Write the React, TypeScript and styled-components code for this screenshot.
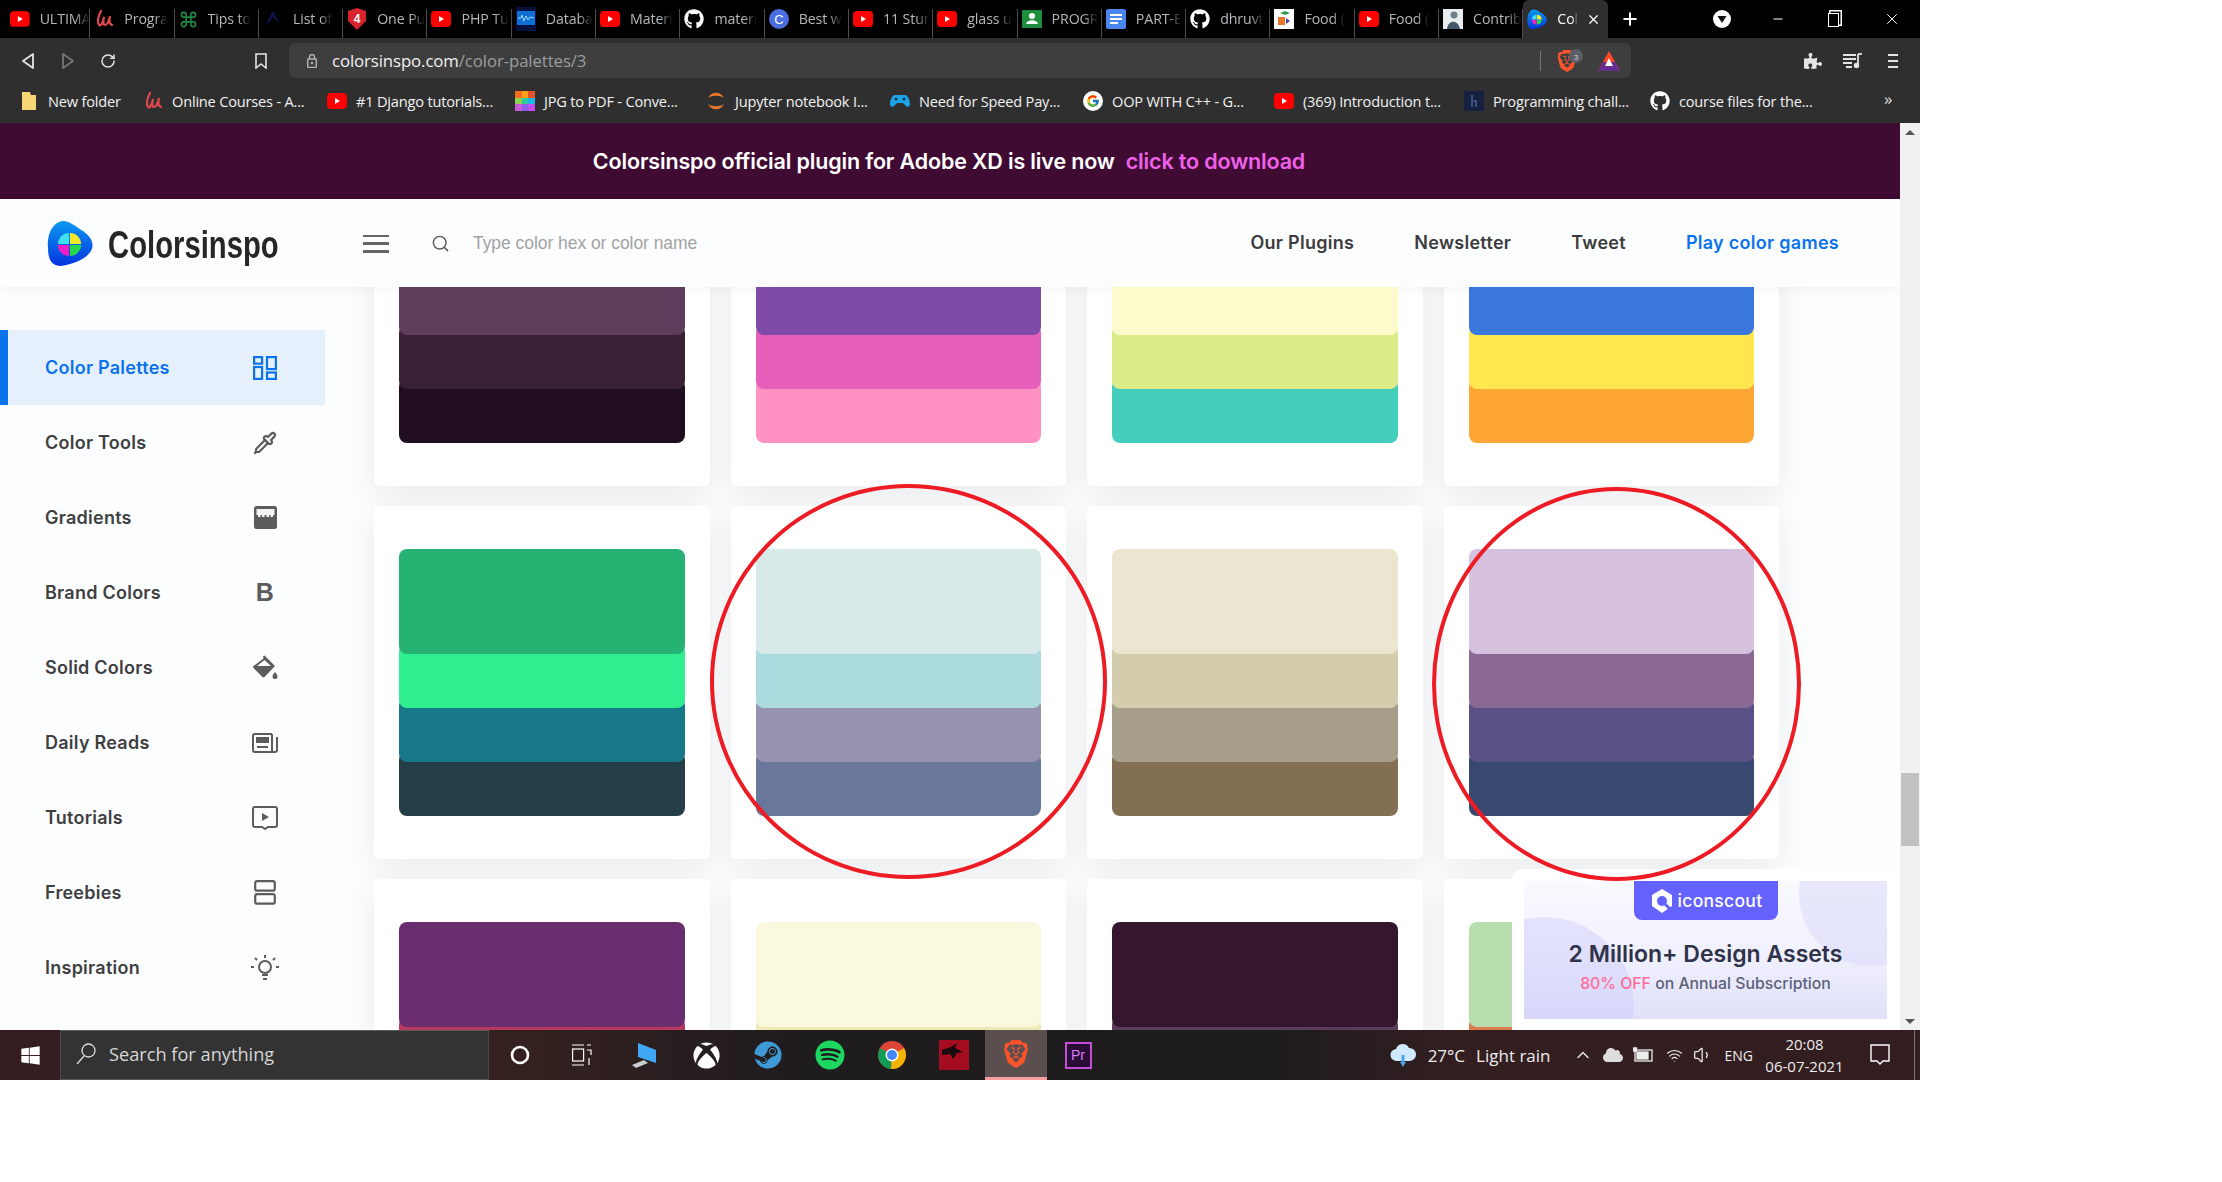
import React from 'react';
import styled, { createGlobalStyle } from 'styled-components';
import { FaGithub, FaWindows, FaXbox, FaSteam, FaSpotify, FaPuzzlePiece, FaCloud } from 'react-icons/fa';
import { FcGoogle } from 'react-icons/fc';
import { SiBrave } from 'react-icons/si';
import { Command, Pipette, Search, Wifi, Volume1, Plus, X, Minus, ChevronUp, RotateCw } from 'lucide-react';

const Global = createGlobalStyle`
  html, body { margin: 0; padding: 0; background: #fff; }
  * { box-sizing: border-box; }
`;

const Screen = styled.div`
  width: 1920px; height: 1080px; display: flex; flex-direction: column; overflow: hidden;
  font-family: "Open Sans", "Liberation Sans", sans-serif;
`;

/* ---------- tab strip ---------- */
const TabStrip = styled.div`
  height: 38px; flex: none; background: #000; display: flex; align-items: stretch; padding-left: 6px;
`;
const Tab = styled.div<{ $active?: boolean }>`
  width: 84.3px; flex: none; display: flex; align-items: center;
  padding-left: 4px; gap: 10px; position: relative;
  background: ${p => (p.$active ? '#2f2f2f' : 'transparent')};
  border-radius: ${p => (p.$active ? '6px 6px 0 0' : '0')};
  &::after {
    content: ''; position: absolute; right: 0; top: 9px; bottom: 0; width: 1px;
    background: ${p => (p.$active ? 'transparent' : '#4d4d4d')};
  }
`;
const TabTitle = styled.span<{ $active?: boolean }>`
  font-size: 14.2px; color: ${p => (p.$active ? '#fff' : '#b4b8bc')}; white-space: nowrap;
  letter-spacing: -0.1px; margin-top: -1px;
  -webkit-mask-image: linear-gradient(90deg, #000 70%, transparent);
  mask-image: linear-gradient(90deg, #000 70%, transparent);
`;
const TabClose = styled.span`
  margin-left: -2px; color: #fff; display: flex; align-items: center;
`;
const NewTab = styled.div`
  width: 44px; flex: none; display: flex; align-items: center; justify-content: center; color: #fff;
`;
const WindowControls = styled.div`
  margin-left: auto; display: flex; align-items: center; color: #fff;
`;
const WinBtn = styled.div<{ $w: number }>`
  width: ${p => p.$w}px; height: 38px; display: flex; align-items: center; justify-content: center;
`;
const RestoreIcon = styled.span`
  width: 11px; height: 14px; border: 1.5px solid #fff; display: block; box-shadow: 2px -2px 0 -0.5px #000, 2px -2px 0 1px #fff; margin-top: 2px;
`;

/* ---------- toolbar ---------- */
const Toolbar = styled.div`
  height: 45px; flex: none; background: #2f2f2f; display: flex; align-items: flex-start; padding-left: 8px; padding-top: 5px;
`;
const ToolSlot = styled.div<{ $w?: number; $ml?: number; $dim?: boolean }>`
  width: ${p => p.$w ?? 40}px; margin-left: ${p => p.$ml ?? 0}px; height: 35px; flex: none;
  display: flex; align-items: center; justify-content: center; color: ${p => (p.$dim ? '#777' : '#e4e4e4')};
`;
const AddressBar = styled.div`
  width: 1342px; margin-left: 8px; height: 35px; flex: none; background: #3e3e3e; border-radius: 7px;
  display: flex; align-items: center; padding: 0 11px 0 18px;
`;
const Url = styled.div`
  margin-left: 15px; font-size: 16.8px; color: #9a9da0; white-space: nowrap; letter-spacing: -0.1px; margin-top: -1px;
`;
const UrlHost = styled.span` color: #f1f1f1; `;
const AddressEnd = styled.div`
  margin-left: auto; display: flex; align-items: center; height: 100%; position: relative;
`;
const AddressDivider = styled.span`
  width: 1px; height: 20px; background: #777; margin-right: 15px;
`;
const ShieldBadge = styled.span`
  position: absolute; left: 29px; top: 6px; width: 14px; height: 14px; border-radius: 50%;
  background: #5b5e66; color: #ddd; font-size: 8px; display: flex; align-items: center; justify-content: center;
`;

/* ---------- bookmarks ---------- */
const BookmarkBar = styled.div`
  height: 40px; flex: none; background: #2f2f2f; display: flex; align-items: center; padding: 0 0 5px 19px; position: relative;
`;
const Bookmark = styled.div<{ $w: number }>`
  width: ${p => p.$w}px; flex: none; display: flex; align-items: center; gap: 9px; white-space: nowrap;
  font-size: 14.6px; color: #f2f2f2; letter-spacing: -0.2px;
`;
const MoreMarks = styled.div`
  position: absolute; left: 1884px; top: 4px; color: #ddd; font-size: 17px;
`;

/* ---------- page ---------- */
const Page = styled.div`
  flex: 1; min-height: 0; display: flex; position: relative; background: #fcfdff;
`;
const PageColumn = styled.div`
  flex: 1; min-width: 0; display: flex; flex-direction: column;
`;
const Banner = styled.div`
  height: 76px; flex: none; background: #400b33; display: flex; align-items: center; justify-content: center;
  gap: 11px; padding-right: 2px; font-family: Inter, sans-serif; font-size: 21.5px; font-weight: 600; color: #fff; letter-spacing: -0.15px;
`;
const BannerLink = styled.span` color: #f060ea; `;
const Header = styled.header`
  height: 88px; flex: none; background: #fcfdff; display: flex; align-items: center; padding-left: 47px; position: relative; z-index: 3;
  box-shadow: 0 2px 10px rgba(0,0,0,.05);
`;
const LogoWord = styled.div`
  width: 210px; margin-left: 15px; font-family: "Liberation Sans", sans-serif; font-weight: 700; font-size: 38px; color: #262626;
  transform: scaleX(.77); transform-origin: left center; white-space: nowrap; margin-top: 4px; flex: none;
`;
const Burger = styled.div`
  width: 26px; height: 18px; margin-left: 45px; flex: none; display: flex; flex-direction: column; justify-content: space-between; margin-top: 1px;
`;
const BurgerBar = styled.span` height: 2.5px; background: #666; display: block; `;
const SearchSlot = styled.div`
  margin-left: 42px; flex: none; color: #555; display: flex;
`;
const Placeholder = styled.div`
  margin-left: 23px; font-family: "Liberation Sans", sans-serif; font-size: 17.5px; color: #a2a2a2; letter-spacing: -0.05px; margin-top: 1px;
`;
const Nav = styled.nav`
  margin-left: auto; display: flex; padding-right: 61px; gap: 60px; margin-top: -1px;
`;
const NavLink = styled.span<{ $blue?: boolean }>`
  font-family: Inter, sans-serif; font-size: 18px; font-weight: 600; letter-spacing: .28px; color: ${p => (p.$blue ? '#0a73ec' : '#3c3c3c')};
`;
const Body = styled.div`
  flex: 1; min-height: 0; display: flex;
`;
const Sidebar = styled.aside`
  width: 325px; flex: none; padding-top: 43px; background: #fcfdff; position: relative; z-index: 2;
  display: flex; flex-direction: column;
`;
const SideItem = styled.div<{ $active?: boolean }>`
  height: 75px; flex: none; display: flex; align-items: center; justify-content: space-between;
  padding: 0 45px 0 ${p => (p.$active ? 37 : 45)}px;
  background: ${p => (p.$active ? '#e6f0fd' : 'transparent')};
  border-left: ${p => (p.$active ? '8px solid #0a73ec' : 'none')};
  color: ${p => (p.$active ? '#0a73ec' : '#3f3f3f')};
  font-family: Inter, sans-serif; font-weight: 600; font-size: 18px; letter-spacing: .25px;
`;
const SideIcon = styled.span`
  width: 30px; height: 30px; display: flex; align-items: center; justify-content: center; color: #5c5c5c; flex: none;
`;
const LetterIcon = styled.span`
  font-family: "Liberation Sans", sans-serif; font-weight: 700; font-size: 25px; color: #5c5c5c; line-height: 1;
`;
const Main = styled.main`
  flex: 1; min-width: 0; overflow: hidden; padding-left: 49px;
`;
const Grid = styled.div`
  display: grid; grid-template-columns: repeat(4, 335.5px); gap: 20px 21px; margin-top: -154px;
`;
const Card = styled.div`
  height: 353px; background: #fff; border-radius: 5px; padding: 43px 25px; 
  box-shadow: 0 10px 32px rgba(0,0,0,.075);
`;
const Swatch = styled.div`
  height: 267px; display: flex; flex-direction: column;
`;
const Stripe = styled.div<{ $c: string; $h: number; $z: number; $first: boolean }>`
  flex: none; background: ${p => p.$c}; border-radius: 8px; z-index: ${p => p.$z}; position: relative;
  height: ${p => p.$h + (p.$first ? 0 : 10)}px; margin-top: ${p => (p.$first ? 0 : -10)}px;
`;
const Scrollbar = styled.div`
  width: 20px; flex: none; background: #f1f1f1; position: relative; z-index: 4;
`;
const Thumb = styled.div`
  position: absolute; left: 1px; top: 650px; width: 18px; height: 73px; background: #c1c1c1;
`;
const Arrow = styled.div<{ $down?: boolean }>`
  position: absolute; left: 5px; ${p => (p.$down ? 'bottom: 6px' : 'top: 7px')}; width: 0; height: 0;
  border-left: 5px solid transparent; border-right: 5px solid transparent;
  ${p => (p.$down ? 'border-top: 5px solid #555' : 'border-bottom: 5px solid #555')};
`;
const Circle = styled.div<{ $l: number; $t: number; $w: number; $h: number }>`
  position: absolute; z-index: 6; left: ${p => p.$l}px; top: ${p => p.$t}px; width: ${p => p.$w}px; height: ${p => p.$h}px;
  border: 4.5px solid #ed1c24; border-radius: 50%; pointer-events: none;
`;

/* ---------- promo ---------- */
const Promo = styled.div`
  position: absolute; z-index: 5; left: 1512px; bottom: 0; width: 387px; height: 161px; background: #fff;
  border-radius: 10px 0 0 0; padding: 12px 12px 11px 12px;
`;
const PromoInner = styled.div`
  height: 100%; position: relative; overflow: hidden; background: linear-gradient(180deg, #f9f9ff 0%, #f1f1fe 50%, #e0e0fa 100%);
  display: flex; flex-direction: column; align-items: center; font-family: Inter, sans-serif;
`;
const PromoBlob = styled.div<{ $left: number; $top: number; $size: number; $c: string }>`
  position: absolute; left: ${p => p.$left}px; top: ${p => p.$top}px; width: ${p => p.$size}px; height: ${p => p.$size}px;
  border-radius: 50%; background: ${p => p.$c};
`;
const ScoutTab = styled.div`
  width: 144px; height: 39px; background: #6563ff; border-radius: 0 0 8px 8px; display: flex; align-items: center; justify-content: center;
  gap: 3px; color: #fff; font-size: 17.5px; font-weight: 500; position: relative; letter-spacing: 0.3px;
`;
const PromoTitle = styled.div`
  margin-top: 20px; font-size: 23px; font-weight: 600; color: #2f3349; position: relative; white-space: nowrap;
`;
const PromoSub = styled.div`
  margin-top: 6px; font-size: 15.8px; color: #5c6178; position: relative; white-space: nowrap; font-weight: 500;
`;
const PromoOff = styled.span` color: #ff6b98; `;

/* ---------- taskbar ---------- */
const Taskbar = styled.div`
  height: 50px; flex: none; display: flex; align-items: center; position: relative; z-index: 7;
  background: linear-gradient(90deg, #331d21 0%, #33201f 28%, #1f1c1e 42%, #1e1c1e 66%, #331e20 76%, #331d20 100%);
  color: #f0f0f0;
`;
const StartSlot = styled.div`
  width: 60px; height: 50px; flex: none; display: flex; align-items: center; justify-content: center; color: #fff;
`;
const SearchBox = styled.div`
  width: 429px; height: 50px; flex: none; background: #333; border-top: 1px solid #5a5a5a; border-bottom: 1px solid #5a5a5a;
  border-right: 1px solid #4a4a4a; border-left: 1px solid #4a4a4a; display: flex; align-items: center; padding: 0 0 2px 15px; gap: 13px;
  font-size: 18.2px; color: #d6d6d6;
`;
const TaskSlot = styled.div<{ $active?: boolean }>`
  width: 62px; height: 50px; flex: none; display: flex; align-items: center; justify-content: center; position: relative;
  background: ${p => (p.$active ? '#5a4e4f' : 'transparent')};
  border-bottom: ${p => (p.$active ? '3px solid #fb9ea1' : 'none')};
`;
const PrIcon = styled.span`
  width: 27px; height: 27px; border: 2px solid #c44dd8; background: #2a0d37; color: #d97cf0; font-size: 14px;
  display: flex; align-items: center; justify-content: center; font-family: "Liberation Sans", sans-serif;
`;
const Tray = styled.div`
  margin-left: auto; display: flex; align-items: center; height: 100%; padding-right: 6px; position: relative;
`;
const TrayText = styled.span<{ $ml: number; $size?: number }>`
  margin-left: ${p => p.$ml}px; font-size: ${p => p.$size ?? 17}px; color: #eee; white-space: nowrap;
`;
const TrayIcon = styled.span<{ $ml: number }>`
  margin-left: ${p => p.$ml}px; display: flex; align-items: center; color: #eee;
`;
const Clock = styled.div`
  margin-left: 14px; width: 75px; display: flex; flex-direction: column; align-items: center; font-size: 15px; line-height: 22px; color: #eee; white-space: nowrap;
`;
const TrayEdge = styled.span`
  position: absolute; right: 5px; top: 0; bottom: 0; width: 1px; background: #777;
`;
const Notify = styled.span`
  margin-left: 28px; margin-right: 24px; display: flex;
`;

/* ---------- drawings ---------- */
type Kind = 'yt' | 'udemy' | 'pretzel' | 'bird' | 'shield' | 'db' | 'gh' | 'c' | 'class' | 'docs' | 'food' | 'man' | 'colors' | 'folder' | 'jpg' | 'jupyter' | 'game' | 'google' | 'h';

const Fav = ({ k }: { k: Kind }) => {
  switch (k) {
    case 'yt':
      return <svg width="20" height="20" viewBox="0 0 20 20"><rect x="0" y="2" width="20" height="16" rx="4" fill="#f00" /><path d="M8 7l5 3-5 3z" fill="#fff" /></svg>;
    case 'udemy':
      return <svg width="20" height="20" viewBox="0 0 20 20"><path d="M7 2C4 8 3 13 5 16c2 2 4-3 5-8-1 4-1 8 1 8 2 0 4-5 5-9-1 4-1 8 2 9" fill="none" stroke="#e0484d" strokeWidth="2.2" strokeLinecap="round" /></svg>;
    case 'pretzel':
      return <Command size={19} color="#1f8a3c" strokeWidth={2} />;
    case 'bird':
      return <svg width="20" height="20" viewBox="0 0 20 20"><path d="M2 18L9 3l2 0 7 15-4-6-4-4-3 4z" fill="#11114f" /></svg>;
    case 'shield':
      return <svg width="20" height="22" viewBox="0 0 20 22"><path d="M10 0l9 3v10l-9 9-9-9V3z" fill="#d8232a" /><text x="10" y="15" textAnchor="middle" fontSize="12" fontWeight="700" fill="#fff" fontFamily="Liberation Sans">4</text></svg>;
    case 'db':
      return <svg width="20" height="24" viewBox="0 0 20 24"><rect width="20" height="24" fill="#04113f" /><rect x="1" y="4" width="18" height="14" fill="#0b6fd6" /><path d="M2 11h3l1-3 2 6 2-5 2 4 2-3 4 1" stroke="#9fd4ff" fill="none" /></svg>;
    case 'gh':
      return <FaGithub size={20} color="#fff" />;
    case 'c':
      return <svg width="20" height="20" viewBox="0 0 20 20"><circle cx="10" cy="10" r="10" fill="#4a6ee0" /><text x="10" y="15" textAnchor="middle" fontSize="13" fill="#fff" fontFamily="Liberation Sans">C</text></svg>;
    case 'class':
      return <svg width="20" height="20" viewBox="0 0 20 20"><rect width="20" height="18" y="1" rx="1" fill="#1e8e3e" /><circle cx="10" cy="7" r="3" fill="#fff" /><path d="M4 15c1-5 11-5 12 0z" fill="#fff" /></svg>;
    case 'docs':
      return <svg width="20" height="20" viewBox="0 0 20 20"><rect width="20" height="20" rx="2" fill="#4a86f0" /><path d="M4 5h12v2H4zM4 9h12v2H4zM4 13h8v2H4z" fill="#fff" /></svg>;
    case 'food':
      return <svg width="20" height="20" viewBox="0 0 20 20"><rect width="20" height="20" fill="#fff" /><path d="M6 4l5-2 5 2-5 2z" fill="#2e9e4a" /><path d="M4 8h7v8H4z" fill="#e8762c" /><path d="M12 9l4 3-4 3z" fill="#5a3fb0" /></svg>;
    case 'man':
      return <svg width="20" height="20" viewBox="0 0 20 20"><rect width="20" height="20" fill="#e8edf0" /><circle cx="11" cy="6" r="3.5" fill="#6d7f8c" /><path d="M4 20c1-9 11-10 13 0z" fill="#44586a" /></svg>;
    case 'colors':
      return <Logo size={20} />;
    case 'folder':
      return <svg width="20" height="20" viewBox="-2 0 20 20"><path d="M1 1h8l1 3h5v15H1z" fill="#f7d774" /></svg>;
    case 'jpg':
      return <svg width="20" height="20" viewBox="0 0 20 20"><path d="M0 0h7v7H0z" fill="#f46b1f" /><path d="M7 0h6v7H7z" fill="#f9a01b" /><path d="M13 0h7v7h-7z" fill="#e5502a" /><path d="M0 7h7v6H0z" fill="#8ed14f" /><path d="M7 7h6v6H7z" fill="#2fc9a0" /><path d="M13 7h7v6h-7z" fill="#22b5e8" /><path d="M0 13h7v7H0z" fill="#c95bd8" /><path d="M7 13h6v7H7z" fill="#8f5cf0" /><path d="M13 13h7v7h-7z" fill="#c04ef0" /></svg>;
    case 'jupyter':
      return <svg width="20" height="22" viewBox="0 0 20 22"><path d="M2 8c3-7 13-7 16 0-4-3-12-3-16 0z" fill="#e8772e" /><path d="M2 14c3 7 13 7 16 0-4 3-12 3-16 0z" fill="#e8772e" /></svg>;
    case 'game':
      return <svg width="20" height="14" viewBox="0 0 20 14"><path d="M5 1h10c3 0 5 6 5 9s-3 4-5 1l-2-2H7l-2 2c-2 3-5 2-5-1s2-9 5-9z" fill="#1ea5e9" /><circle cx="6" cy="5" r="1.6" fill="#0b3a55" /><circle cx="14" cy="5" r="1.6" fill="#0b3a55" /></svg>;
    case 'google':
      return <svg width="20" height="20" viewBox="0 0 20 20"><circle cx="10" cy="10" r="10" fill="#fff" /><g transform="translate(3 3)"><FcGoogle size={14} /></g></svg>;
    case 'h':
      return <svg width="20" height="20" viewBox="0 0 20 20"><rect width="20" height="20" fill="#16213f" /><path d="M8 4v12M8 10h4v6" stroke="#3c4f80" strokeWidth="2" fill="none" /></svg>;
  }
};

const Logo = ({ size }: { size: number }) => (
  <svg width={size} height={size} viewBox="0 0 46 46">
    <defs>
      <linearGradient id="lg" x1="0" y1="0" x2="0" y2="1"><stop offset="0" stopColor="#0a9bf0" /><stop offset="1" stopColor="#0433e0" /></linearGradient>
    </defs>
    <path d="M12 2c7-4 16 4 24 9 8 6 12 12 8 20-5 8-17 13-30 15C5 46 1 40 1 28 0 18 3 6 12 2z" fill="url(#lg)" />
    <path d="M22 13a11 11 0 0 0-11 11h11z" fill="#3fe0f0" />
    <path d="M23 13a11 11 0 0 1 11 11H23z" fill="#f5e92a" />
    <path d="M11 25a11 11 0 0 0 11 11V25z" fill="#f01dc4" />
    <path d="M34 25a11 11 0 0 1-11 11V25z" fill="#25d84a" />
  </svg>
);

const BookmarkGlyph = () => <svg width="14" height="16" viewBox="0 0 14 16"><path d="M2 1h10v14l-5-4-5 4z" fill="none" stroke="#e4e4e4" strokeWidth="1.6" /></svg>;
const LockGlyph = () => <svg width="10" height="14" viewBox="0 0 10 14"><rect x="0.7" y="5" width="8.6" height="8.4" rx="1" fill="none" stroke="#b5b5b5" strokeWidth="1.4" /><path d="M2.5 5V3a2.5 2.5 0 0 1 5 0v2" fill="none" stroke="#b5b5b5" strokeWidth="1.4" /><circle cx="5" cy="9" r="1.2" fill="#b5b5b5" /></svg>;
const Triangle = ({ dir }: { dir: 'l' | 'r' }) => <svg width="12" height="16" viewBox="0 0 12 16"><path d={dir === 'l' ? 'M11 1v14L1 8z' : 'M1 1v14l10-7z'} fill="none" stroke="currentColor" strokeWidth="1.8" strokeLinejoin="round" /></svg>;
const Bat = () => <svg width="22" height="20" viewBox="0 0 22 20"><path d="M11 0L22 20H0z" fill="#ff4724" /><path d="M0 20l5-9 12 0 5 9z" fill="#662d91" /><path d="M11 7l4 8H7z" fill="#fff" /></svg>;
const Queue = () => <svg width="20" height="16" viewBox="0 0 20 16" fill="none" stroke="#e4e4e4" strokeWidth="1.8"><path d="M0 2h13M0 6h13M0 10h9M3 14h6" /><path d="M15 1v11" /><circle cx="13.5" cy="12.5" r="1.8" fill="#e4e4e4" /><path d="M15 1h4" /></svg>;
const Kebab = () => <svg width="12" height="16" viewBox="0 0 12 16" fill="#e4e4e4"><path d="M1 1h10v2H1zM1 7h10v2H1zM1 13h10v2H1z" /></svg>;

const GridIcon = () => <svg width="24" height="24" viewBox="0 0 24 24" fill="none" stroke="#0a73ec" strokeWidth="2.2"><rect x="1.1" y="1.1" width="8" height="6.5" /><rect x="14" y="1.1" width="8.9" height="12" /><rect x="1.1" y="11" width="8" height="11.9" /><rect x="14" y="16.5" width="8.9" height="6.4" /></svg>;
const GradIcon = () => <svg width="23" height="23" viewBox="0 0 23 23"><rect width="23" height="23" rx="2.5" fill="#5c5c5c" /><rect x="2.5" y="3" width="18" height="6" fill="#f4f4f4" /><path d="M4 9h2.5v2H4zM8 9h2.5v2H8zM12.5 9H15v2h-2.5zM16.5 9H19v2h-2.5z" fill="#f4f4f4" /></svg>;
const BucketIcon = () => <svg width="26" height="26" viewBox="0 0 26 26" fill="#5c5c5c"><path d="M11 1.5l1.5-1 2 2L23 11 12.5 22a1.5 1.5 0 0 1-2 0L1.5 13a1.5 1.5 0 0 1 0-2L11.5 3.5z" /><path d="M5 11l7.5-6 6.5 6z" fill="#fcfdff" /><path d="M23 17c1.5 2 2.5 3.2 2.5 4.4a2.5 2.5 0 0 1-5 0c0-1.2 1-2.4 2.5-4.4z" /></svg>;
const NewsIcon = () => <svg width="26" height="20" viewBox="0 0 26 20" fill="none" stroke="#5c5c5c" strokeWidth="2"><path d="M20 1H3a2 2 0 0 0-2 2v14a2 2 0 0 0 2 2h20a2 2 0 0 0 2-2V4" /><path d="M20 1v18" /><rect x="5" y="5" width="11" height="4" fill="#5c5c5c" /><path d="M5 14h11" /></svg>;
const PlayIcon = () => <svg width="26" height="24" viewBox="0 0 26 24" fill="none" stroke="#5c5c5c" strokeWidth="2"><path d="M3 1h20a2 2 0 0 1 2 2v16a2 2 0 0 1-2 2h-7l-3 2-3-2H3a2 2 0 0 1-2-2V3a2 2 0 0 1 2-2z" /><path d="M10 7l7 4-7 4z" fill="#5c5c5c" stroke="none" /></svg>;
const RowsIcon = () => <svg width="22" height="25" viewBox="0 0 22 25" fill="none" stroke="#5c5c5c" strokeWidth="2.2"><rect x="1.2" y="1.2" width="19.6" height="9.5" rx="2" /><rect x="1.2" y="14.2" width="19.6" height="9.5" rx="2" /></svg>;
const BulbIcon = () => <svg width="28" height="28" viewBox="0 0 28 28" fill="none" stroke="#5c5c5c" strokeWidth="2"><circle cx="14" cy="13" r="6" /><path d="M11 21h6M12 25h4" /><path d="M14 1v3M4 4l2 2M24 4l-2 2M0 13h3M25 13h3" /></svg>;

const Cloud = () => <svg width="26" height="24" viewBox="0 0 26 24"><path d="M7 18a6 6 0 0 1-1-12 7 7 0 0 1 13-1 6.5 6.5 0 0 1 1 13z" fill="#cfe9ff" /><path d="M13 12v7" stroke="#4da3e8" strokeWidth="3" /><path d="M13 24l-3-5h6z" fill="#4da3e8" /></svg>;
const Battery = () => <svg width="20" height="16" viewBox="0 0 20 16" fill="none" stroke="#eee" strokeWidth="1.3"><rect x="2" y="3" width="17" height="11" /><rect x="4" y="5" width="11" height="7" fill="#eee" /><path d="M0.5 1h3v3h-3z" fill="#eee" /></svg>;
const Bubble = () => <svg width="20" height="22" viewBox="0 0 20 22" fill="none" stroke="#fff" strokeWidth="1.4"><path d="M1 1h18v16h-6l-3 3-3-3H1z" /></svg>;
const TaskView = () => <svg width="20" height="22" viewBox="0 0 20 22" fill="none" stroke="#fff" strokeWidth="1.2"><path d="M0 1h12M0 21h12" /><rect x="0.6" y="5" width="11" height="12" /><path d="M15 1h4M15 6h4v5M17 14v7" /></svg>;
const PcIcon = () => <svg width="28" height="28" viewBox="0 0 28 28"><path d="M8 2l18 7v13L8 16z" fill="#3fa9f5" /><path d="M2 24l12-5 4 3-12 5z" fill="#c9ced3" /></svg>;
const ChromeIcon = () => <svg width="28" height="28" viewBox="0 0 28 28"><circle cx="14" cy="14" r="14" fill="#db4437" /><path d="M14 14L2 7a14 14 0 0 0 11 21z" fill="#0f9d58" /><path d="M14 14l12-7a14 14 0 0 1-13 21z" fill="#f4b400" /><circle cx="14" cy="14" r="6.5" fill="#fff" /><circle cx="14" cy="14" r="5" fill="#4285f4" /></svg>;
const DragonIcon = () => <svg width="30" height="30" viewBox="0 0 30 30"><rect width="30" height="30" fill="#a30d1f" /><path d="M3 10l9-3 6-4-2 5 8 4-6 1-4 6-3-5-8 1z" fill="#1a0b0e" /></svg>;

const BraveIcon = ({ size }: { size: number }) => <SiBrave size={size} color="#fb542b" />;

const tabs: [Kind, string][] = [
  ['yt', 'ULTIMA'], ['udemy', 'Progra'], ['pretzel', 'Tips to'], ['bird', 'List of'], ['shield', 'One Pu'],
  ['yt', 'PHP Tu'], ['db', 'Databa'], ['yt', 'Materi'], ['gh', 'materi'], ['c', 'Best w'],
  ['yt', '11 Stur'], ['yt', 'glass u'], ['class', 'PROGR'], ['docs', 'PART-E'], ['gh', 'dhruvt'],
  ['food', 'Food ('], ['yt', 'Food ('], ['man', 'Contrib'],
];

const marks: [Kind, string, number][] = [
  ['folder', 'New folder', 124], ['udemy', 'Online Courses - A...', 184], ['yt', '#1 Django tutorials...', 188],
  ['jpg', 'JPG to PDF - Conve...', 191], ['jupyter', 'Jupyter notebook I...', 184], ['game', 'Need for Speed Pay...', 193],
  ['google', 'OOP WITH C++ - G...', 191], ['yt', '(369) Introduction t...', 190], ['h', 'Programming chall...', 186],
  ['gh', 'course files for the...', 200],
];

const rows: [string[], string[], string[], string[]][] = [
  [['#6b4a6b', '#5c3e5c', '#392035', '#200e20'], ['#9a6cc0', '#7f4aa8', '#e65fbb', '#ff92c2'], ['#fffde0', '#fdfbcc', '#dcec88', '#44cfbc'], ['#6a9ae8', '#3b78dd', '#ffe74f', '#ffa736']],
  [['#25b273', '#2eee90', '#17788a', '#253d46'], ['#d7e9e8', '#acdbdf', '#9692af', '#69779b'], ['#ece6d0', '#d4cdad', '#a69e89', '#826f54'], ['#d6c1df', '#8a6a94', '#5a5085', '#39486f']],
  [['#6a2d70', '#b8385e', '#d96b5a', '#f0a860'], ['#faf8de', '#eeeab5', '#d9d68a', '#b5b060'], ['#34162e', '#5a3d5c', '#8a6a8a', '#b09ab0'], ['#b8deb0', '#dd7c4d', '#a04a3a', '#60302a']],
];

const side: [string, React.ReactNode][] = [
  ['Color Palettes', <GridIcon />],
  ['Color Tools', <Pipette size={24} color="#5c5c5c" strokeWidth={2.2} />],
  ['Gradients', <GradIcon />],
  ['Brand Colors', <LetterIcon>B</LetterIcon>],
  ['Solid Colors', <BucketIcon />],
  ['Daily Reads', <NewsIcon />],
  ['Tutorials', <PlayIcon />],
  ['Freebies', <RowsIcon />],
  ['Inspiration', <BulbIcon />],
];

export default function App() {
  return (
    <>
      <Global />
      <Screen>
        <TabStrip>
          {tabs.map(([k, t], i) => (
            <Tab key={i}><Fav k={k} /><TabTitle>{t}</TabTitle></Tab>
          ))}
          <Tab $active><Fav k="colors" /><TabTitle $active>Col</TabTitle><TabClose><X size={15} /></TabClose></Tab>
          <NewTab><Plus size={20} strokeWidth={2.4} /></NewTab>
          <WindowControls>
            <WinBtn $w={43} />
            <WinBtn $w={24}><svg width="20" height="20" viewBox="0 0 20 20"><circle cx="10" cy="10" r="9" fill="#fff" /><path d="M5.5 7h9L10 14z" fill="#111" /></svg></WinBtn>
            <WinBtn $w={23} />
            <WinBtn $w={42}><Minus size={14} /></WinBtn>
            <WinBtn $w={68}><RestoreIcon /></WinBtn>
            <WinBtn $w={50}><X size={18} strokeWidth={1.3} /></WinBtn>
            <WinBtn $w={3} />
          </WindowControls>
        </TabStrip>

        <Toolbar>
          <ToolSlot><Triangle dir="l" /></ToolSlot>
          <ToolSlot $dim><Triangle dir="r" /></ToolSlot>
          <ToolSlot><RotateCw size={16} strokeWidth={2.2} /></ToolSlot>
          <ToolSlot $ml={113}><BookmarkGlyph /></ToolSlot>
          <AddressBar>
            <LockGlyph />
            <Url><UrlHost>colorsinspo.com</UrlHost>/color-palettes/3</Url>
            <AddressEnd>
              <AddressDivider />
              <BraveIcon size={22} />
              <ShieldBadge>3</ShieldBadge>
              <TrayIcon $ml={20}><Bat /></TrayIcon>
            </AddressEnd>
          </AddressBar>
          <ToolSlot $ml={162}><FaPuzzlePiece size={18} color="#e4e4e4" /></ToolSlot>
          <ToolSlot><Queue /></ToolSlot>
          <ToolSlot><Kebab /></ToolSlot>
        </Toolbar>

        <BookmarkBar>
          {marks.map(([k, t, w], i) => (
            <Bookmark key={i} $w={w}><Fav k={k} /><span>{t}</span></Bookmark>
          ))}
          <MoreMarks>»</MoreMarks>
        </BookmarkBar>

        <Page>
          <PageColumn>
            <Banner>
              <span>Colorsinspo official plugin for Adobe XD is live now</span>
              <BannerLink>click to download</BannerLink>
            </Banner>
            <Header>
              <Logo size={46} />
              <LogoWord>Colorsinspo</LogoWord>
              <Burger><BurgerBar /><BurgerBar /><BurgerBar /></Burger>
              <SearchSlot><Search size={19} strokeWidth={1.8} /></SearchSlot>
              <Placeholder>Type color hex or color name</Placeholder>
              <Nav>
                <NavLink>Our Plugins</NavLink>
                <NavLink>Newsletter</NavLink>
                <NavLink>Tweet</NavLink>
                <NavLink $blue>Play color games</NavLink>
              </Nav>
            </Header>
            <Body>
              <Sidebar>
                {side.map(([t, ic], i) => (
                  <SideItem key={t} $active={i === 0}>{t}<SideIcon>{ic}</SideIcon></SideItem>
                ))}
              </Sidebar>
              <Main>
                <Grid>
                  {rows.flat().map((cols, i) => (
                    <Card key={i}>
                      <Swatch>
                        {cols.map((c, j) => (
                          <Stripe key={j} $c={c} $h={j === 0 ? 105 : 54} $z={4 - j} $first={j === 0} />
                        ))}
                      </Swatch>
                    </Card>
                  ))}
                </Grid>
              </Main>
            </Body>
          </PageColumn>
          <Scrollbar>
            <Arrow />
            <Thumb />
            <Arrow $down />
          </Scrollbar>
          <Circle $l={710} $t={361} $w={397} $h={395} />
          <Circle $l={1432} $t={364} $w={369} $h={394} />
          <Promo>
            <PromoInner>
              <PromoBlob $left={-70} $top={36} $size={180} $c="rgba(205,205,250,.45)" />
              <PromoBlob $left={275} $top={-60} $size={145} $c="rgba(215,215,250,.5)" />
              <ScoutTab>
                <svg width="26" height="26" viewBox="0 0 26 26"><path d="M13 1l10 6v11l-10 7-10-7V7z" fill="#fff" /><circle cx="13" cy="13" r="5" fill="#6563ff" /><path d="M15 15l8 8" stroke="#6563ff" strokeWidth="3" /></svg>
                iconscout
              </ScoutTab>
              <PromoTitle>2 Million+ Design Assets</PromoTitle>
              <PromoSub><PromoOff>80% OFF</PromoOff> on Annual Subscription</PromoSub>
            </PromoInner>
          </Promo>
        </Page>

        <Taskbar>
          <StartSlot><FaWindows size={21} /></StartSlot>
          <SearchBox>
            <svg width="20" height="22" viewBox="0 0 20 22" fill="none" stroke="#ddd" strokeWidth="1.3"><circle cx="12.5" cy="7.5" r="6.5" /><path d="M8 13L1 21" /></svg>
            Search for anything
          </SearchBox>
          <TaskSlot><svg width="20" height="20" viewBox="0 0 20 20"><circle cx="10" cy="10" r="8" fill="none" stroke="#fff" strokeWidth="2.6" /></svg></TaskSlot>
          <TaskSlot><TaskView /></TaskSlot>
          <TaskSlot><PcIcon /></TaskSlot>
          <TaskSlot><FaXbox size={27} color="#fff" /></TaskSlot>
          <TaskSlot><FaSteam size={28} color="#3d9ad6" /></TaskSlot>
          <TaskSlot><FaSpotify size={30} color="#1ed760" /></TaskSlot>
          <TaskSlot><ChromeIcon /></TaskSlot>
          <TaskSlot><DragonIcon /></TaskSlot>
          <TaskSlot $active><BraveIcon size={28} /></TaskSlot>
          <TaskSlot><PrIcon>Pr</PrIcon></TaskSlot>
          <Tray>
            <Cloud />
            <TrayText $ml={12}>27°C</TrayText>
            <TrayText $ml={11}>Light rain</TrayText>
            <TrayIcon $ml={22}><ChevronUp size={20} strokeWidth={1.6} /></TrayIcon>
            <TrayIcon $ml={10}><FaCloud size={20} color="#ddd" /></TrayIcon>
            <TrayIcon $ml={10}><Battery /></TrayIcon>
            <TrayIcon $ml={13}><Wifi size={17} strokeWidth={1.5} /></TrayIcon>
            <TrayIcon $ml={10}><Volume1 size={20} strokeWidth={1.5} /></TrayIcon>
            <TrayText $ml={12} $size={14}>ENG</TrayText>
            <Clock><span>20:08</span><span>06-07-2021</span></Clock>
            <Notify><Bubble /></Notify>
            <TrayEdge />
          </Tray>
        </Taskbar>
      </Screen>
    </>
  );
}
